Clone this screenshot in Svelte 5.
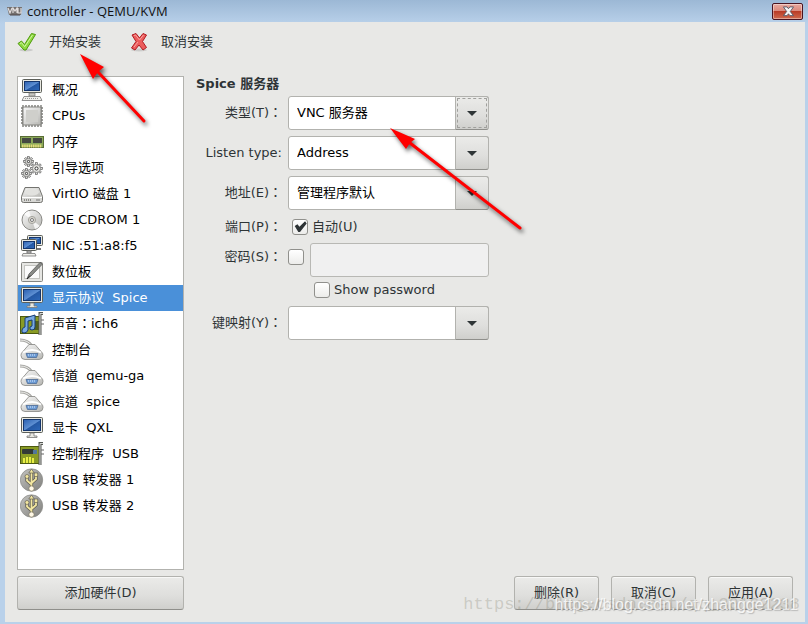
<script>
    const devices = [
        { icon: 'computer', label: '概况' },
        { icon: 'cpu', label: 'CPUs' },
        { icon: 'memory', label: '内存' },
        { icon: 'gears', label: '引导选项' },
        { icon: 'disk', label: 'VirtIO 磁盘 1' },
        { icon: 'cdrom', label: 'IDE CDROM 1' },
        { icon: 'network', label: 'NIC :51:a8:f5' },
        { icon: 'tablet', label: '数位板' },
        { icon: 'display', label: '显示协议  Spice' },
        { icon: 'sound', label: '声音：ich6' },
        { icon: 'serial', label: '控制台' },
        { icon: 'serial', label: '信道  qemu-ga' },
        { icon: 'serial', label: '信道  spice' },
        { icon: 'display', label: '显卡  QXL' },
        { icon: 'card', label: '控制程序  USB' },
        { icon: 'usb', label: 'USB 转发器 1' },
        { icon: 'usb', label: 'USB 转发器 2' },
    ];

    let selected = $state(8);
    let serverType = $state('VNC 服务器');
    let listenType = $state('Address');
    let address = $state('管理程序默认');
    let keymap = $state('');
    let autoPort = $state(true);
    let usePassword = $state(false);
    let showPassword = $state(false);
    let password = $state('');

    const teeth = [0, 45, 90, 135, 180, 225, 270, 315];
</script>

{#snippet screen(x, y, w, h)}
    <rect {x} {y} width={w} height={h} rx="1" fill="#e9e9e2" stroke="#5b5e58" />
    <rect x={x + 2} y={y + 2} width={w - 4} height={h - 4} fill="url(#screen-blue)" stroke="#15366d" />
{/snippet}

{#snippet gear(cx, cy, r)}
    {#each teeth as angle}
        <rect
            x={cx - 1}
            y={cy - r - 1.8}
            width="2"
            height="3"
            fill="#e4e4e0"
            stroke="#555"
            stroke-width="0.7"
            transform="rotate({angle} {cx} {cy})"
        />
    {/each}
    <circle {cx} {cy} {r} fill="#e6e6e2" stroke="#777" stroke-width="0.7" />
    <circle {cx} {cy} r={r / 2.6} fill="#fff" stroke="#333" />
{/snippet}

{#snippet choices(options)}
    {#each options as opt}
        <option value={opt}>{opt}</option>
    {/each}
{/snippet}

{#snippet deviceIcon(name)}
    <svg class="device-icon" viewBox="0 0 24 24" aria-hidden="true">
        {#if name === 'computer'}
            {@render screen(2.5, 1.5, 19, 13)}
            <path d="M9 15h6v3H9z" fill="#c8c8c2" stroke="#777" stroke-width="0.7" />
            <path d="M4 18.5h16l2 4H2z" fill="#efefeb" stroke="#777" stroke-width="0.8" />
            <path d="M5 20.5h14" stroke="#999" stroke-dasharray="1 1" />
        {:else if name === 'display'}
            {@render screen(1.5, 1.5, 21, 15)}
            <path d="M10 17h4v3h3v1.5H7V20h3z" fill="#e8e8e2" stroke="#777" stroke-width="0.8" />
        {:else if name === 'cpu'}
            <path d="M3 1v22M6 1v22M9 1v22M12 1v22M15 1v22M18 1v22M21 1v22" stroke="#7c7c78" stroke-width="1.4" />
            <path d="M1 4h22M1 7h22M1 10h22M1 13h22M1 16h22M1 19h22" stroke="#7c7c78" stroke-width="1.4" />
            <rect x="3" y="3" width="18" height="18" rx="1" fill="url(#metal)" stroke="#858581" />
            <rect x="6" y="6" width="12" height="12" fill="#cfcfcb" />
        {:else if name === 'memory'}
            <rect x="0.5" y="6.5" width="23" height="11" fill="#8ba95a" stroke="#5a6d35" />
            <rect x="2" y="8" width="9" height="5" fill="#454842" />
            <rect x="13" y="8" width="9" height="5" fill="#454842" />
            <path d="M2 16h20" stroke="#e6dc7a" stroke-width="3" stroke-dasharray="1.5 0.7" />
        {:else if name === 'gears'}
            {@render gear(8.5, 5.5, 3)}
            {@render gear(16.5, 12.5, 4)}
            {@render gear(6.5, 17.5, 3)}
        {:else if name === 'disk'}
            <path d="M5 5.5h14l3.5 9v4q0 2-2 2h-17q-2 0-2-2v-4z" fill="#d7d7d4" stroke="#73736f" />
            <path d="M6 6.5h12l3 8H3z" fill="url(#metal)" />
            <ellipse cx="12" cy="10" rx="7" ry="3.5" fill="#e2e2df" />
            <path d="M2 15.5h20" stroke="#fff" />
            <path d="M4 18h8" stroke="#8b8b87" stroke-width="2" stroke-dasharray="1 1" />
            <path d="M16 18h4" stroke="#777" />
        {:else if name === 'cdrom'}
            <circle cx="12" cy="12" r="10" fill="url(#metal)" stroke="#898985" />
            <path d="M12 12L4 6a10 10 0 0 1 5-3zM12 12l8 6a10 10 0 0 1-5 3z" fill="#fff" opacity="0.8" />
            <circle cx="12" cy="12" r="3.6" fill="#d8d6ce" stroke="#a5a49f" />
            <circle cx="12" cy="12" r="1.5" fill="#fff" stroke="#777" />
        {:else if name === 'network'}
            {@render screen(7.5, 1.5, 15, 10)}
            <path d="M14 12v3h7" stroke="#777" fill="none" stroke-width="2" />
            {@render screen(1.5, 5.5, 15, 11)}
            <path d="M7 17h4v2H7z" fill="#ccc" stroke="#777" />
            <path d="M3 19.5h12l1 2.5H2z" fill="#efefeb" stroke="#777" stroke-width="0.8" />
        {:else if name === 'tablet'}
            <rect x="1.5" y="2.5" width="21" height="19" rx="1" fill="#e6e6e3" stroke="#858581" />
            <rect x="4.5" y="5.5" width="15" height="13" fill="#fbfbfb" stroke="#c4c4c0" />
            <path d="M7 19l2-5L20 2.5q2 0 2 2L11 16z" fill="#8b8d89" stroke="#555" stroke-width="0.8" />
            <path d="M7 19l3-3.5" stroke="#222" />
        {:else if name === 'sound' || name === 'card'}
            <rect x="0.5" y="4.5" width="19" height="17" fill="#899b24" stroke="#4d5a10" />
            {#if name === 'sound'}
                <rect x="12" y="9" width="7" height="9" fill="#4f5d1b" />
                <path
                    d="M5 6l10-3v12q0 3-3 3t-2-3l2-1V8L8 9v9q-1 3-4 3t-2-3 3-3z"
                    fill="#79a9e2"
                    stroke="#173d76"
                />
            {:else}
                <rect x="2" y="7" width="12" height="5" rx="1" fill="#333a36" />
                <rect x="13" y="8" width="4" height="4" fill="#51769b" />
                <path d="M4 21v-5M7 21v-6M10 21v-6M13 21v-5" stroke="#e8ee45" stroke-width="2" />
            {/if}
            <path d="M23 1.5h-3V23" fill="none" stroke="#545753" stroke-width="3" />
            <path d="M23 1.5h-3V23" fill="none" stroke="#d6d7d3" />
            <path d="M21 8h3M21 12h3" stroke="#666" />
        {:else if name === 'serial'}
            <path d="M0 2q8 0 12 6" fill="none" stroke="#a4a4a0" stroke-width="3" />
            <path d="M0 2q8 0 12 6" fill="none" stroke="#ececea" />
            <path
                d="M9 6.5h6l7 8q1 1 1 3 0 4-4 4H5q-4 0-4-4 0-2 1-3z"
                fill="url(#metal)"
                stroke="#858581"
                stroke-width="0.8"
            />
            <path d="M3 14.5q9-5 18 0" fill="none" stroke="#fff" stroke-width="2" />
            <path d="M6 15.5h12l-1.5 4h-9z" fill="#6c9bd4" stroke="#4d6b96" stroke-width="0.8" />
            <path d="M8 17h8" stroke="#dceaff" stroke-dasharray="1 1" />
        {:else if name === 'usb'}
            <circle cx="11.5" cy="12" r="11.2" fill="url(#usb-grey)" stroke="#8a8a86" stroke-width="0.7" />
            <path d="M11.5 3v17M11.5 16.5l-4.5-4V8M11.5 15l4.5-4V7" fill="none" stroke="#55534a" stroke-width="3.2" />
            <path d="M11.5 3v17M11.5 16.5l-4.5-4V8M11.5 15l4.5-4V7" fill="none" stroke="#f3e7a0" stroke-width="1.8" />
            <path d="M8.8 5l2.7-4 2.7 4z" fill="#f3e7a0" stroke="#55534a" stroke-width="0.6" />
            <circle cx="7" cy="8.5" r="2" fill="#f3e7a0" stroke="#55534a" stroke-width="0.6" />
            <rect x="14.2" y="5" width="3.6" height="3.6" fill="#f3e7a0" stroke="#55534a" stroke-width="0.6" />
            <circle cx="11.5" cy="20.5" r="2.6" fill="#fff8e6" stroke="#77705a" stroke-width="0.6" />
        {/if}
    </svg>
{/snippet}

<svg class="defs" aria-hidden="true">
    <linearGradient id="screen-blue" x1="0" y1="0" x2="1" y2="1">
        <stop offset="0" stop-color="#2a5faf" />
        <stop offset="0.5" stop-color="#5d8fd2" />
        <stop offset="0.55" stop-color="#2559a5" />
        <stop offset="1" stop-color="#2e69ba" />
    </linearGradient>
    <linearGradient id="metal" x1="0" y1="0" x2="1" y2="1">
        <stop offset="0" stop-color="#fafafa" />
        <stop offset="1" stop-color="#b6b6b2" />
    </linearGradient>
    <linearGradient id="usb-grey" x1="0" y1="0" x2="1" y2="1">
        <stop offset="0" stop-color="#c4c4c1" />
        <stop offset="1" stop-color="#7e7e7b" />
    </linearGradient>
</svg>

<div class="window">
    <header class="titlebar">
        <svg class="app-icon" viewBox="0 0 15 12" aria-hidden="true">
            <path d="M0 2h15l-1 8H2z" fill="#74706f" />
            <path d="M1 3l2 5 2-5M6 8V3l2 3 2-3v5M11 3v5h3V3" fill="none" stroke="#e2dede" stroke-width="1.2" />
            <path d="M3 10h10" stroke="#50484a" />
        </svg>
        <h1>controller - QEMU/KVM</h1>
        <button class="close" aria-label="Close">
            <svg viewBox="0 0 14 12" aria-hidden="true">
                <path
                    d="M2 1h4l1.5 2L9 1h4L9.5 6 13 10.5H9L7.5 8.5 6 10.5H2L5.5 6z"
                    fill="#f5f5f5"
                    stroke="#535666"
                />
            </svg>
        </button>
    </header>

    <main class="client">
        <div class="toolbar">
            <button class="tool">
                <svg viewBox="0 0 20 20" aria-hidden="true">
                    <ellipse cx="9" cy="18" rx="7" ry="1.5" fill="#000" opacity="0.12" />
                    <path
                        d="M1 11.5l3.5-2.5 3 3.5L14.5 1.5l4 1L9 18H7z"
                        fill="#8fd941"
                        stroke="#4f9a0c"
                        stroke-linejoin="round"
                    />
                    <path d="M3 11.5l1.500-.8 3.200 4L15.500 3" fill="none" stroke="#d0f5a0" />
                </svg>
                <span>开始安装</span>
            </button>
            <button class="tool">
                <svg viewBox="0 0 20 20" aria-hidden="true">
                    <ellipse cx="10" cy="18" rx="8" ry="1.5" fill="#000" opacity="0.12" />
                    <path
                        d="M3 3l4-1.5L10.5 6 14 1.5l3.5 1.5-4 6.5 4 6-3.5 2.5-4-5-4 5L2.5 16l4.500-6.500z"
                        fill="#ec5c5c"
                        stroke="#b01c22"
                        stroke-linejoin="round"
                    />
                    <path d="M5 3.5l1.500-.5 4 5L14.500 3M5 15l4-5" fill="none" stroke="#f9a3a0" />
                </svg>
                <span>取消安装</span>
            </button>
        </div>

        <div class="content">
            <aside class="sidebar">
                <ul class="devices">
                    {#each devices as device, i}
                        <li>
                            <button class="device" class:selected={i === selected} onclick={() => (selected = i)}>
                                {@render deviceIcon(device.icon)}
                                <span>{device.label}</span>
                            </button>
                        </li>
                    {/each}
                </ul>
                <button class="btn">添加硬件(D)</button>
            </aside>

            <section class="details">
                <h2>Spice 服务器</h2>
                <div class="form">
                    <label for="type">类型(T)<span class="colon">：</span></label>
                    <div class="combo focused">
                        <select id="type" bind:value={serverType}>
                            {@render choices(['VNC 服务器', 'Spice 服务器'])}
                        </select>
                        <span class="arrow"></span>
                    </div>

                    <label for="listen">Listen type:</label>
                    <div class="combo">
                        <select id="listen" bind:value={listenType}>
                            {@render choices(['Address', 'None'])}
                        </select>
                        <span class="arrow"></span>
                    </div>

                    <label for="address">地址(E)<span class="colon">：</span></label>
                    <div class="combo">
                        <select id="address" bind:value={address}>
                            {@render choices(['管理程序默认', '所有接口'])}
                        </select>
                        <span class="arrow"></span>
                    </div>

                    <span class="label">端口(P)<span class="colon">：</span></span>
                    <label class="check port">
                        <input type="checkbox" bind:checked={autoPort} />
                        <span>自动(U)</span>
                    </label>

                    <label class="top" for="use-password">密码(S)<span class="colon">：</span></label>
                    <div class="password">
                        <input id="use-password" type="checkbox" bind:checked={usePassword} />
                        <div class="password-entry">
                            <input
                                class="entry"
                                type={showPassword ? 'text' : 'password'}
                                aria-label="密码"
                                disabled={!usePassword}
                                bind:value={password}
                            />
                            <label class="check">
                                <input type="checkbox" bind:checked={showPassword} />
                                <span>Show password</span>
                            </label>
                        </div>
                    </div>

                    <label for="keymap">键映射(Y)<span class="colon">：</span></label>
                    <div class="combo">
                        <select id="keymap" bind:value={keymap}>
                            {@render choices(['', 'en-us', 'de'])}
                        </select>
                        <span class="arrow"></span>
                    </div>
                </div>

                <div class="actions">
                    <button class="btn">删除(R)</button>
                    <button class="btn">取消(C)</button>
                    <button class="btn">应用(A)</button>
                </div>
            </section>
        </div>
    </main>

    <svg class="arrows" width="540" height="250" aria-hidden="true">
        <path d="M144 121L98 72" stroke="#f00" stroke-width="3" stroke-linecap="round" />
        <path d="M80 54L104 67 98 72 93 79z" fill="#f00" />
        <path d="M520 228L410 143" stroke="#f00" stroke-width="3" stroke-linecap="round" />
        <path d="M390 128L415 139 410 143 406 149z" fill="#f00" />
    </svg>

    <span class="watermark mono">https://blog.csdn.net/qq_30162238</span>
    <span class="watermark">https://blog.csdn.net/zhangge1211</span>
</div>

<style>
    :global(body) {
        background: #b9d1ea;
    }
    * {
        box-sizing: border-box;
    }
    .window {
        position: relative;
        display: flex;
        flex-direction: column;
        min-height: 100vh;
        padding: 0 3px 2px 5px;
        background: linear-gradient(#9cb8d5, #b9d1ea 24px);
        color: #2e3436;
        font-family: "DejaVu Sans", "Noto Sans CJK SC", sans-serif;
        font-size: 13px;
        line-height: 16px;
        overflow: hidden;
    }
    .defs {
        position: absolute;
        width: 0;
        height: 0;
    }
    button,
    input,
    select {
        margin: 0;
        color: inherit;
        font: inherit;
    }
    .titlebar {
        display: flex;
        align-items: center;
        gap: 5px;
        height: 22px;
        padding: 0 2px;
    }
    .titlebar h1 {
        flex: 1;
        margin: 0;
        color: #111;
        font-family: "Open Sans", "Noto Sans", sans-serif;
        font-size: 13px;
        font-weight: 400;
        line-height: 20px;
    }
    .app-icon {
        width: 15px;
        height: 12px;
    }
    .close {
        display: flex;
        align-items: center;
        justify-content: center;
        width: 31px;
        height: 17px;
        padding: 0;
        border: 1px solid #4a1420;
        border-radius: 2px;
        background: linear-gradient(#e9a99f, #dc8a7d 45%, #b93c27 50%, #cf6a4f);
        box-shadow: inset 0 0 0 1px rgba(255, 255, 255, 0.4);
    }
    .close svg {
        width: 14px;
        height: 11px;
    }
    .client {
        flex: 1;
        display: flex;
        flex-direction: column;
        padding: 0 12px 12px;
        background: #e8e8e6;
    }
    .toolbar {
        display: flex;
        gap: 28px;
        height: 54px;
        padding-top: 10px;
    }
    .tool {
        display: flex;
        align-items: center;
        gap: 12px;
        height: 20px;
        padding: 0;
        border: none;
        background: none;
    }
    .tool svg {
        width: 20px;
        height: 20px;
    }
    .content {
        flex: 1;
        display: flex;
        gap: 12px;
    }
    .sidebar {
        display: flex;
        flex-direction: column;
        gap: 6px;
        width: 167px;
    }
    .devices {
        flex: 1;
        margin: 0;
        padding: 0;
        border: 1px solid #b2b2ae;
        background: #fff;
        list-style: none;
    }
    .device {
        display: flex;
        align-items: center;
        gap: 8px;
        width: 100%;
        height: 26px;
        padding: 0 2px;
        border: none;
        background: none;
        color: #000;
        white-space: pre;
    }
    .device span {
        font-family: "DejaVu Sans", "Noto Sans CJK TC", sans-serif;
    }
    .device.selected {
        background: #4a90d9;
        color: #fff;
    }
    .device-icon {
        width: 24px;
        height: 24px;
    }
    .btn {
        height: 34px;
        padding: 0 0 1px;
        border: 1px solid #b2b2ae;
        border-bottom-color: #8f8f8b;
        border-radius: 3px;
        background: linear-gradient(#ebebe9, #dededc 60%, #cfcfcc);
        box-shadow: inset 0 1px #f8f8f7;
    }
    .details {
        flex: 1;
        display: flex;
        flex-direction: column;
    }
    h2 {
        margin: 0;
        font-size: 13px;
        line-height: 16px;
        padding-bottom: 4px;
    }
    .form {
        display: grid;
        grid-template-columns: 86px 201px;
        gap: 6px;
        align-items: center;
    }
    .form > label:not(.check),
    .label {
        text-align: right;
        white-space: nowrap;
    }
    .form > .top {
        align-self: start;
        line-height: 28px;
    }
    .colon {
        font-family: "DejaVu Sans", "Noto Sans CJK TC", sans-serif;
    }
    .combo {
        position: relative;
    }
    .combo select {
        display: block;
        appearance: none;
        width: 100%;
        height: 34px;
        padding: 0 40px 0 8px;
        border: 1px solid #b2b2ae;
        border-radius: 3px;
        background: #fff;
        color: #000;
        outline: none;
    }
    .arrow {
        position: absolute;
        top: 0;
        right: 0;
        bottom: 0;
        display: flex;
        align-items: center;
        justify-content: center;
        width: 34px;
        border: 1px solid #b2b2ae;
        border-bottom-color: #8f8f8b;
        border-radius: 0 3px 3px 0;
        background: linear-gradient(#ebebe9, #dededc 60%, #cfcfcc);
        pointer-events: none;
    }
    .arrow::after {
        content: '';
        border: 5px solid transparent;
        border-top-color: #2e3436;
        border-bottom: none;
    }
    .focused .arrow {
        outline: 1px dashed #a0a09d;
        outline-offset: -3px;
    }
    .check {
        display: flex;
        align-items: center;
        gap: 4px;
        padding-left: 4px;
        white-space: nowrap;
    }
    .port {
        height: 21px;
    }
    input[type='checkbox'] {
        appearance: none;
        flex: none;
        width: 16px;
        height: 16px;
        border: 1px solid #90908c;
        border-radius: 3px;
        background: linear-gradient(#fff, #ececea);
    }
    input[type='checkbox']:checked::after {
        content: '';
        display: block;
        width: 14px;
        height: 14px;
        background: #2e3436;
        clip-path: polygon(12% 46%, 32% 34%, 46% 52%, 86% 12%, 98% 28%, 50% 90%, 38% 90%);
    }
    .password {
        display: flex;
        gap: 6px;
    }
    .password > input {
        margin-top: 6px;
    }
    .password-entry {
        flex: 1;
        display: flex;
        flex-direction: column;
        gap: 3px;
    }
    .password-entry .check {
        height: 20px;
    }
    .entry {
        width: 100%;
        height: 34px;
        padding: 0 8px;
        border: 1px solid #b8b8b4;
        border-radius: 3px;
        background: #f0f0f0;
    }
    .actions {
        display: flex;
        justify-content: flex-end;
        gap: 12px;
        margin-top: auto;
    }
    .actions .btn {
        width: 85px;
    }
    .arrows {
        position: absolute;
        top: 0;
        left: 0;
        filter: drop-shadow(2px 3px 2px rgba(0, 0, 0, 0.6));
        pointer-events: none;
    }
    .watermark {
        position: absolute;
        right: 10px;
        bottom: 9px;
        color: rgba(255, 255, 255, 0.8);
        font-family: "Liberation Sans", sans-serif;
        font-size: 16px;
        line-height: 20px;
        text-shadow: 1px 1px 1px rgba(120, 120, 120, 0.4);
        pointer-events: none;
    }
    .mono {
        right: 8px;
        color: rgba(130, 130, 115, 0.3);
        font-family: "Liberation Mono", monospace;
        font-size: 17px;
        text-shadow: none;
    }
</style>
